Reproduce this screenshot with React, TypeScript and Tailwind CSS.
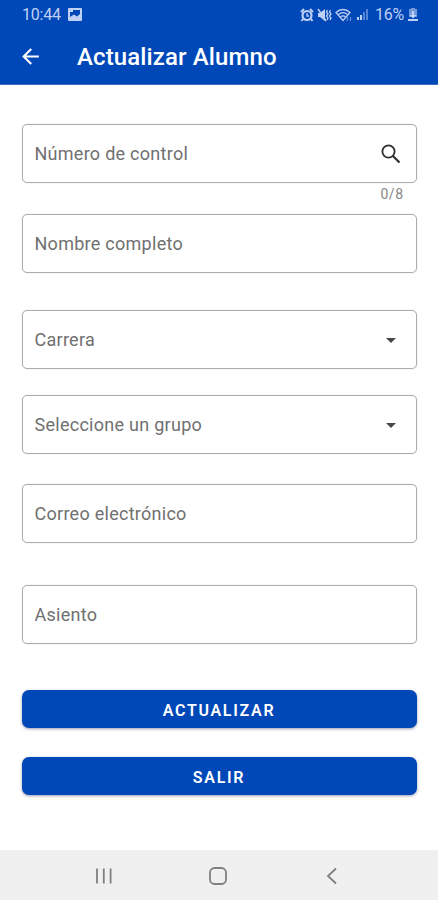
import React, { useState } from 'react';
import { MdArrowBack, MdArrowDropDown } from 'react-icons/md';

interface FieldProps {
  label: string;
  className?: string;
  icon?: React.ReactNode;
}

function Field({ label, className = '', icon }: FieldProps) {
  const [value, setValue] = useState('');

  return (
    <div
      className={`flex h-[59px] items-center rounded-[5px] border border-[#acacac] pr-[13px] pl-[12px] shadow-[0_0_1px_#b8b8b8] ${className}`}
    >
      <input
        type="text"
        value={value}
        onChange={(e) => setValue(e.target.value)}
        placeholder={label}
        aria-label={label}
        className="min-w-0 flex-1 text-[18px] tracking-[0.27px] text-[#606060] placeholder:text-[#707070] focus:outline-none"
      />
      {icon}
    </div>
  );
}

function SearchIcon() {
  return (
    <svg viewBox="0 0 24 24" className="h-[24px] w-[24px] text-[#303030]" fill="none" stroke="currentColor">
      <circle cx="9.500" cy="9.500" r="6.100" strokeWidth="1.800" />
      <path d="M14 14l6.500 6.500" strokeWidth="2.200" />
    </svg>
  );
}

function StatusBar() {
  return (
    <div className="flex h-[29px] items-center pr-[20px] pl-[22px] text-[#bfd0f5]">
      <span className="text-[16px] tracking-[-0.2px]">10:44</span>
      <svg viewBox="0 0 14 13" className="ml-[7px] h-[13px] w-[14px]" fill="currentColor">
        <path
          fillRule="evenodd"
          d="M1 0h12a1 1 0 0 1 1 1v11a1 1 0 0 1-1 1H1a1 1 0 0 1-1-1V1a1 1 0 0 1 1-1zM2 4h3V2h7v4L9 8.500 6 6.500 2 9z"
        />
      </svg>
      <div className="ml-auto flex items-center">
        {/* Alarm */}
        <svg viewBox="0 0 14 14" className="h-[14px] w-[14px]" fill="none" stroke="currentColor">
          <circle cx="7" cy="7.500" r="4.500" strokeWidth="2.200" />
          <path d="M7 5v3h2" strokeWidth="1.300" />
          <path d="M1 4l3-3M13 4l-3-3M3 11l-1.500 2M11 11l1.500 2" strokeWidth="2" />
        </svg>
        {/* Muted with vibration */}
        <svg viewBox="0 0 15 14" className="ml-[3px] h-[14px] w-[15px]" fill="none" stroke="currentColor">
          <path d="M1 5h2l5-4v12L3 9H1z" fill="currentColor" stroke="none" />
          <path d="M1 1l8 12" strokeWidth="1.500" />
          <path d="M10.500 2l-1 2 1.500 2-1.500 2 1.500 2-1 2M13.500 2l-1 2 1.500 2-1.500 2 1.500 2-1 2" strokeWidth="1.300" />
        </svg>
        {/* Wifi with traffic arrows */}
        <svg viewBox="0 0 18 14" className="ml-[3px] h-[14px] w-[18px]" fill="none" stroke="currentColor" strokeWidth="1.300">
          <path d="M1 4.500C5 .5 11 .5 15 4.500L8 12.500z" />
          <path d="M3.500 6.500c2.700-2.300 6.300-2.300 9 0M5.500 9c1.500-1.300 3.500-1.300 5 0" />
          <path d="M12.500 9v4M15.500 9v4" opacity=".5" />
        </svg>
        <svg viewBox="0 0 13 13" className="ml-[3px] h-[13px] w-[13px]" fill="currentColor">
          <path d="M1 9h2v3H1zM4 7h2v5H4z" />
          <path d="M7 4h2v8H7zM10 1h2v11h-2z" opacity=".45" />
        </svg>
        <span className="ml-[6px] text-[16px] tracking-[-0.2px]">16%</span>
        <svg viewBox="0 0 10 14" className="ml-[4px] h-[14px] w-[10px]" fill="currentColor">
          <path d="M3 0h4v1h2v8H1V1h2z" opacity=".6" />
          <path d="M4 3h2v4h2.500L5 10.500 1.500 7H4zM0 11h10v2H0z" />
        </svg>
      </div>
    </div>
  );
}

function NavigationBar() {
  return (
    <nav className="flex h-[50px] items-center bg-[#f0f0f0] pt-px pr-[49px] pl-[47px] text-[#808080]">
      <button aria-label="Recientes" className="flex flex-1 justify-center">
        <svg viewBox="0 0 18 18" className="h-[18px] w-[18px]" stroke="currentColor" strokeWidth="1.800">
          <path d="M2 1.500v15M8.800 1.500v15M15.600 1.500v15" />
        </svg>
      </button>
      <button aria-label="Inicio" className="flex flex-1 justify-center">
        <svg viewBox="0 0 18 18" className="h-[18px] w-[18px]" fill="none" stroke="currentColor" strokeWidth="1.800">
          <rect x="1" y="1" width="16" height="16" rx="4.500" />
        </svg>
      </button>
      <button aria-label="Regresar" className="flex flex-1 justify-center">
        <svg viewBox="0 0 18 18" className="h-[18px] w-[18px]" fill="none" stroke="currentColor" strokeWidth="1.800">
          <path d="M13 1.500L5 9l8 7.500" />
        </svg>
      </button>
    </nav>
  );
}

export default function App() {
  return (
    <div className="flex h-[900px] w-[438px] flex-col overflow-hidden bg-white font-['Roboto',sans-serif]">
      <header className="h-[85px] shrink-0 border-b border-[#3f69c8] bg-[#0047b8]">
        <StatusBar />
        <div className="flex h-[54px] items-center pl-[18px] text-white">
          <button aria-label="Volver">
            <MdArrowBack className="h-[25px] w-[25px]" />
          </button>
          <h1 className="ml-[34px] pt-px text-[24px] font-medium tracking-[0.120px]">Actualizar Alumno</h1>
        </div>
      </header>

      <main className="flex-1 px-[21.500px] pt-[39px]">
        <Field label="Número de control" icon={<SearchIcon />} />
        <div className="flex h-[31px] justify-end pt-[2px] pr-[13px] text-[14px] leading-[18px] tracking-[0.5px] text-[#858585]">
          0/8
        </div>
        <Field label="Nombre completo" />
        <Field
          label="Carrera"
          className="mt-[37px]"
          icon={<MdArrowDropDown className="h-[24px] w-[24px] text-[#484848]" />}
        />
        <Field
          label="Seleccione un grupo"
          className="mt-[26px]"
          icon={<MdArrowDropDown className="h-[24px] w-[24px] text-[#484848]" />}
        />
        <Field label="Correo electrónico" className="mt-[30px]" />
        <Field label="Asiento" className="mt-[42px]" />

        <button className="mt-[46px] block h-[38px] w-full rounded-[7px] bg-[#0047b8] pt-[4px] text-[16px] font-semibold tracking-[1.700px] text-white shadow-[0_1px_3px_rgba(0,0,60,0.4)]">
          ACTUALIZAR
        </button>
        <button className="mt-[29px] block h-[38px] w-full rounded-[7px] bg-[#0047b8] pt-[4px] text-[16px] font-semibold tracking-[1.700px] text-white shadow-[0_1px_3px_rgba(0,0,60,0.4)]">
          SALIR
        </button>
      </main>

      <NavigationBar />
    </div>
  );
}
